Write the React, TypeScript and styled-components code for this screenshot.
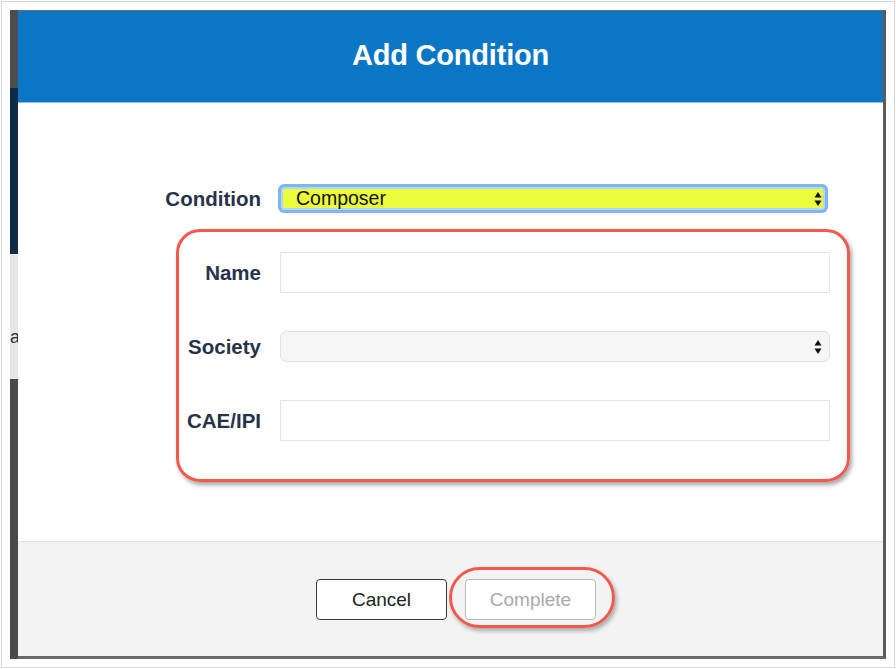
import React from "react";
import styled, { createGlobalStyle } from "styled-components";

const Global = createGlobalStyle`
  html, body { margin: 0; padding: 0; background: #ffffff; }
  body { font-family: "Liberation Sans", Arial, sans-serif; }
  * { box-sizing: border-box; }
`;

const Frame = styled.div`
  margin: 1px;
  width: 894px;
  height: 667px;
  border: 1px solid #d8d8d8;
  padding: 8px;
  background: #ffffff;
`;

const Window = styled.div`
  display: flex;
  width: 876px;
  height: 649px;
`;

const Strip = styled.div`
  width: 8px;
  display: flex;
  flex-direction: column;
  overflow: hidden;
`;

const StripPart = styled.div<{ $h?: number; $bg: string }>`
  ${(p) => (p.$h ? `height: ${p.$h}px;` : "flex: 1;")}
  background: ${(p) => p.$bg};
  color: #333;
  font-size: 18px;
  line-height: 18px;
  padding-top: 74px;
  overflow: hidden;
  white-space: nowrap;
`;

const Modal = styled.div`
  flex: 1;
  display: flex;
  flex-direction: column;
  border-top: 1px solid #6b6b6b;
  border-right: 3px solid #5b5b5b;
  border-bottom: 3px solid #6a6a6a;
  background: #ffffff;
`;

const Header = styled.div`
  height: 92px;
  background: #0b76c6;
  border-bottom: 1px solid #8cc0ea;
  display: flex;
  align-items: center;
  justify-content: center;
  padding-bottom: 2px;
`;

const Title = styled.h1`
  margin: 0;
  color: #ffffff;
  font-size: 29px;
  font-weight: 700;
  letter-spacing: -0.2px;
`;

const Body = styled.div`
  height: 438px;
  padding-top: 80px;
`;

const ConditionRow = styled.div`
  display: grid;
  grid-template-columns: 243px 540px;
  column-gap: 22px;
  align-items: center;
  height: 31px;
`;

const Label = styled.label`
  text-align: right;
  font-size: 20.5px;
  font-weight: 700;
  color: #27324a;
`;

const FocusSelect = styled.div`
  height: 19px;
  background: #ecfd3b;
  box-shadow: 0 0 0 2px #b4d6f8, 0 0 0 5px #7fb5f1;
  border-radius: 2px;
  display: flex;
  align-items: center;
  justify-content: space-between;
  padding: 0 1px 0 13px;
  font-size: 19.5px;
  color: #111;
`;

const Callout = styled.div`
  margin: 15px 0 0 158px;
  width: 674px;
  border: 3px solid #ef5a4d;
  border-radius: 24px;
  box-shadow: 2px 3px 4px rgba(0, 0, 0, 0.35);
  padding: 20px 0 38px;
  display: flex;
  flex-direction: column;
  gap: 33px;
`;

const FieldRow = styled.div`
  display: grid;
  grid-template-columns: 82px 550px;
  column-gap: 19px;
  align-items: center;
  height: 41px;
`;

const TextInput = styled.div`
  height: 41px;
  border: 1px solid #e3e3e3;
  background: #ffffff;
`;

const SelectBox = styled.div`
  height: 31px;
  border: 1px solid #e0e0e0;
  border-radius: 6px;
  background: #f5f5f5;
  display: flex;
  align-items: center;
  justify-content: flex-end;
  padding-right: 7px;
`;

const Footer = styled.div`
  flex: 1;
  background: #f3f3f3;
  border-top: 1px solid #e2e2e2;
  display: flex;
  justify-content: center;
  align-items: flex-start;
  gap: 18px;
  padding: 37px 0 0 11px;
`;

const Button = styled.button<{ $disabled?: boolean }>`
  width: 131px;
  height: 41px;
  background: #ffffff;
  border: 1px solid ${(p) => (p.$disabled ? "#b8b8b8" : "#2c3a55")};
  border-radius: 4px;
  font-family: "Liberation Sans", Arial, sans-serif;
  font-size: 19px;
  color: ${(p) => (p.$disabled ? "#a9a9a9" : "#222222")};
  padding: 0;
  cursor: ${(p) => (p.$disabled ? "default" : "pointer")};
`;

const Marked = styled.div`
  position: relative;
`;

const Ring = styled.div`
  position: absolute;
  left: -16px;
  right: -19px;
  top: -12px;
  bottom: -8px;
  border: 3px solid #ef5a4d;
  border-radius: 32px;
  box-shadow: 2px 3px 4px rgba(0, 0, 0, 0.3);
  pointer-events: none;
`;

const Arrows = () => (
  <svg width="8" height="16" viewBox="0 0 8 16">
    <path d="M4 1 L7.5 6.5 L0.5 6.5 Z" fill="#111" />
    <path d="M0.5 9.5 L7.5 9.5 L4 15 Z" fill="#111" />
  </svg>
);

export default function App() {
  return (
    <>
      <Global />
      <Frame>
        <Window>
          <Strip>
            <StripPart $h={78} $bg="#4e4e4e" />
            <StripPart $h={166} $bg="#0f2b47" />
            <StripPart $h={125} $bg="#e6e6e6">a</StripPart>
            <StripPart $bg="#4a4a4a" />
          </Strip>
          <Modal>
            <Header>
              <Title>Add Condition</Title>
            </Header>
            <Body>
              <ConditionRow>
                <Label>Condition</Label>
                <FocusSelect>
                  <span>Composer</span>
                  <Arrows />
                </FocusSelect>
              </ConditionRow>
              <Callout>
                <FieldRow>
                  <Label>Name</Label>
                  <TextInput />
                </FieldRow>
                <FieldRow>
                  <Label>Society</Label>
                  <SelectBox>
                    <Arrows />
                  </SelectBox>
                </FieldRow>
                <FieldRow>
                  <Label>CAE/IPI</Label>
                  <TextInput />
                </FieldRow>
              </Callout>
            </Body>
            <Footer>
              <Button>Cancel</Button>
              <Marked>
                <Button $disabled>Complete</Button>
                <Ring />
              </Marked>
            </Footer>
          </Modal>
        </Window>
      </Frame>
    </>
  );
}
